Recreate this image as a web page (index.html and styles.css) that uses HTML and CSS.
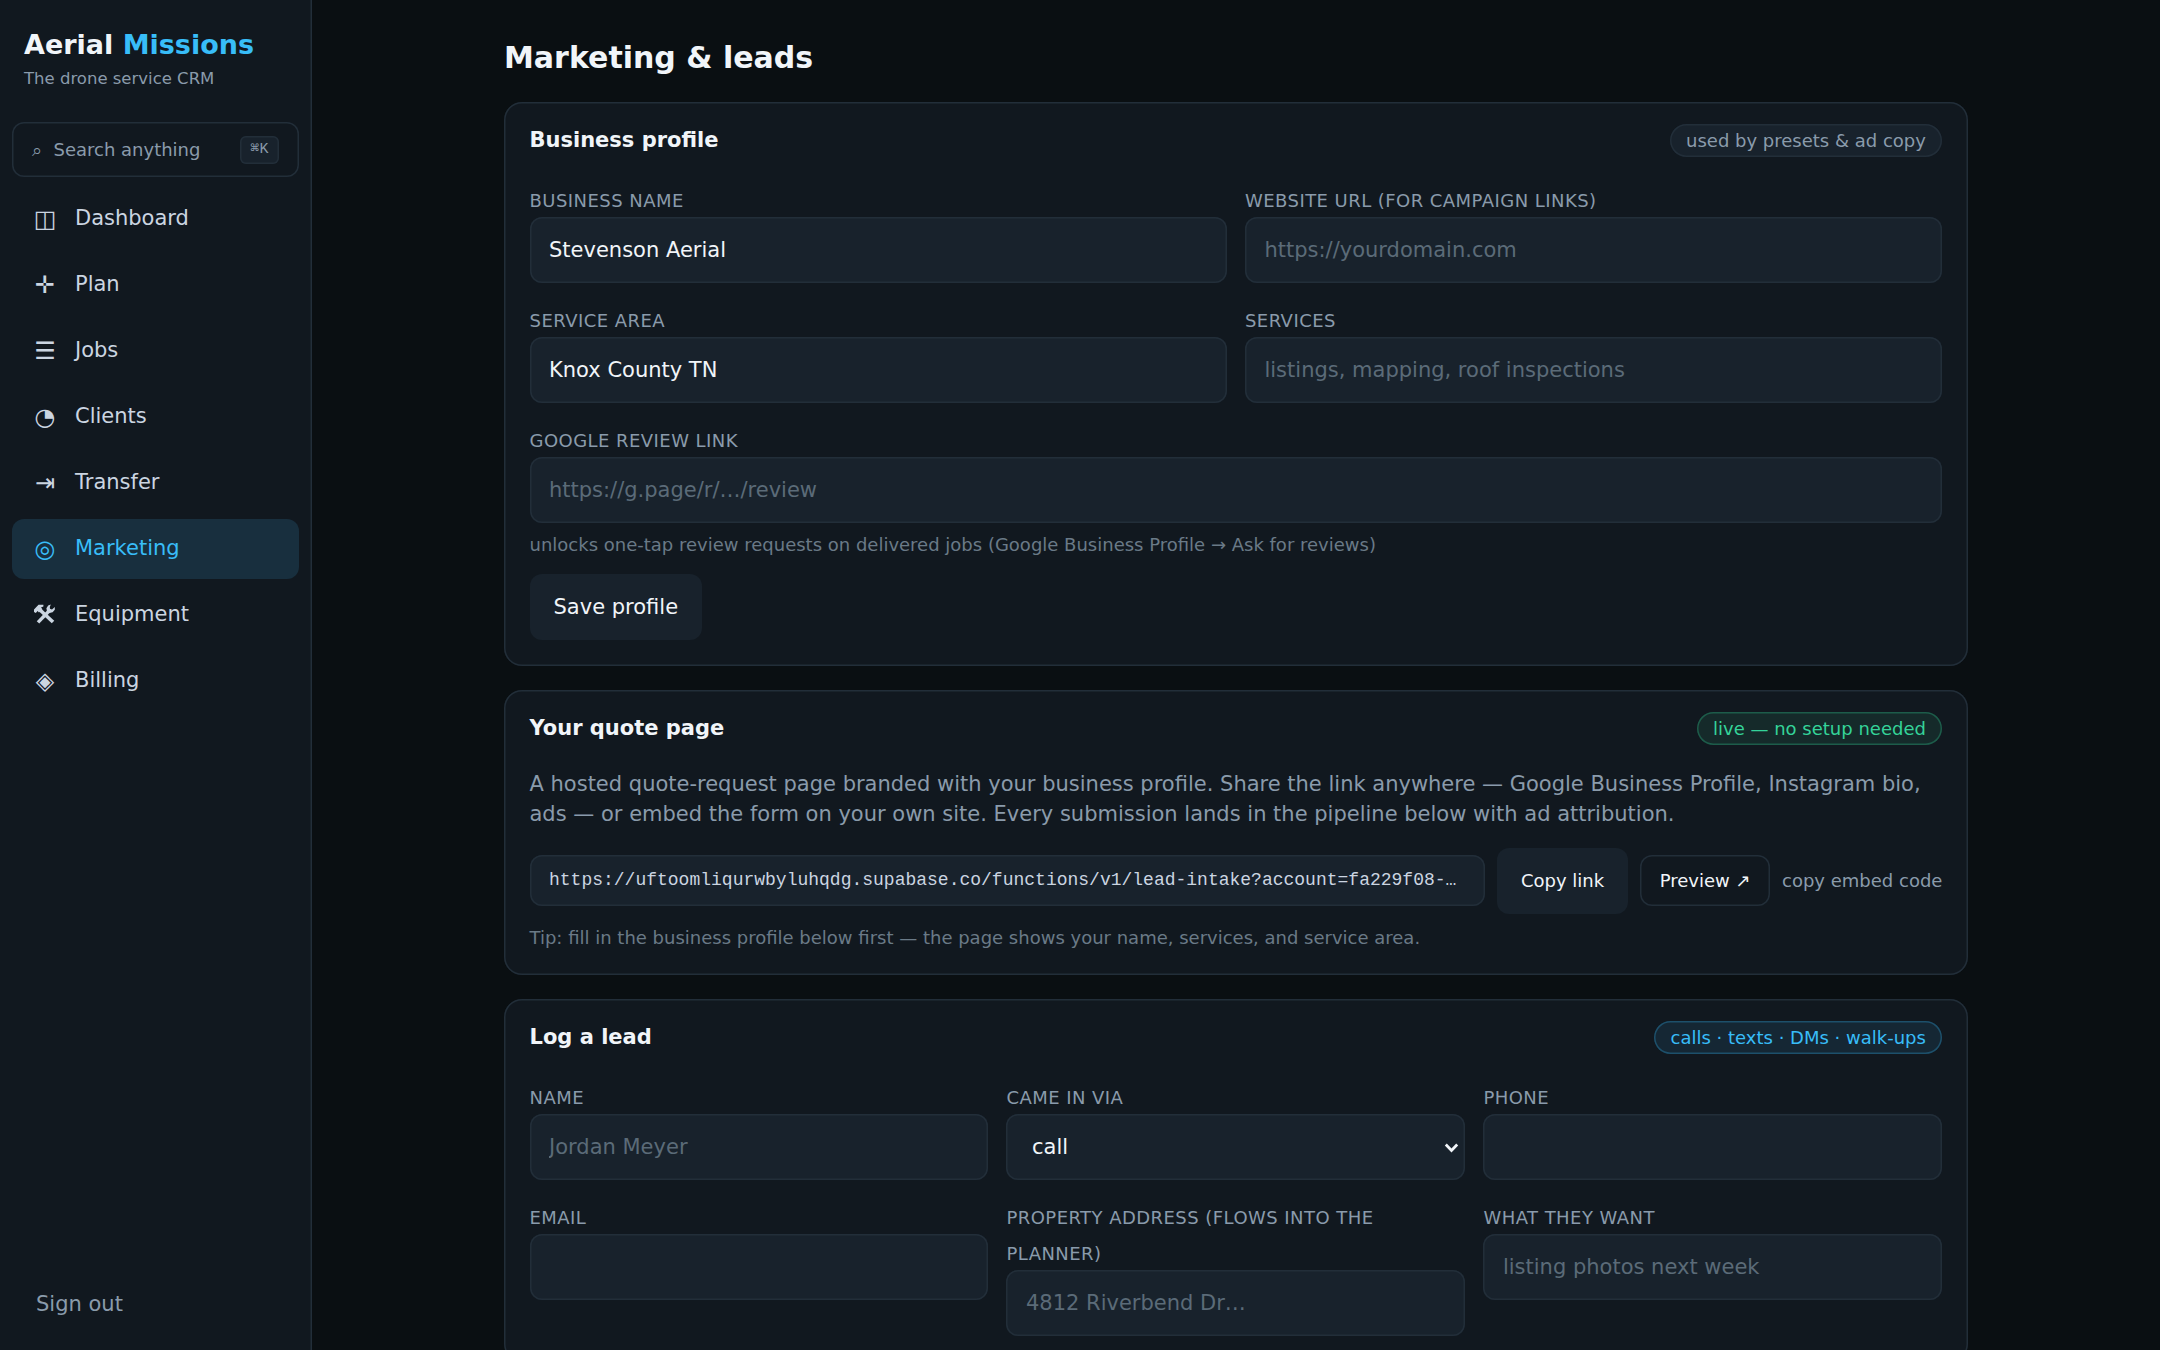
FILE: index.html
```html
<!DOCTYPE html>
<html lang="en">
<head>
    <meta charset="UTF-8">
    <meta name="viewport" content="width=device-width, initial-scale=1.0">
    <title>Aerial Missions - Marketing</title>
    <link rel="stylesheet" href="styles.css">
</head>
<body>
    <aside class="sidebar">
        <div class="brand">
            <div class="brand-name">Aerial <span class="accent">Missions</span></div>
            <div class="brand-sub">The drone service CRM</div>
        </div>

        <button class="search" type="button">
            <span class="search-icon">⌕</span>
            <span class="search-text">Search anything</span>
            <kbd>⌘K</kbd>
        </button>

        <nav class="nav">
            <a class="nav-item"><span class="nav-icon">◫</span>Dashboard</a>
            <a class="nav-item"><span class="nav-icon">✛</span>Plan</a>
            <a class="nav-item"><span class="nav-icon">☰</span>Jobs</a>
            <a class="nav-item"><span class="nav-icon">◔</span>Clients</a>
            <a class="nav-item"><span class="nav-icon">⇥</span>Transfer</a>
            <a class="nav-item active"><span class="nav-icon">◎</span>Marketing</a>
            <a class="nav-item">
                <svg class="nav-tools" width="30" height="20" viewBox="0 0 30 20">
                    <!-- hammer -->
                    <path d="M4 8 L4 5.5 L8.5 0.8 L13.4 0.8 L13.4 2.6 L11 3.6 L12.4 5.2 L9 8.6 L7.6 7 L5.8 9 Z" fill="currentColor"/>
                    <path d="M9.5 5.5 L23 18" stroke="currentColor" stroke-width="3.6"/>
                    <!-- wrench -->
                    <path d="M8 18.4 L20 6" stroke="currentColor" stroke-width="3.4"/>
                    <path d="M20.8 0.6 L18.2 1.4 L16.4 4.2 L17 7.2 L19.4 9 L22.6 8.2 L24.8 5.8 L24.8 3 L22 5.4 L20 4.8 L19.8 3 Z" fill="currentColor"/>
                </svg>Equipment</a>
            <a class="nav-item"><span class="nav-icon">◈</span>Billing</a>
        </nav>

        <button class="signout" type="button">Sign out</button>
    </aside>

    <main class="main">
        <h1>Marketing &amp; leads</h1>

        <section class="card">
            <div class="card-head">
                <h2>Business profile</h2>
                <span class="pill">used by presets &amp; ad copy</span>
            </div>
            <div class="fields two">
                <label class="field">
                    <span class="label">Business name</span>
                    <input type="text" value="Stevenson Aerial">
                </label>
                <label class="field">
                    <span class="label">Website URL (for campaign links)</span>
                    <input type="text" placeholder="https://yourdomain.com">
                </label>
                <label class="field">
                    <span class="label">Service area</span>
                    <input type="text" value="Knox County TN">
                </label>
                <label class="field">
                    <span class="label">Services</span>
                    <input type="text" placeholder="listings, mapping, roof inspections">
                </label>
                <label class="field wide">
                    <span class="label">Google review link</span>
                    <input type="text" placeholder="https://g.page/r/…/review">
                    <span class="hint">unlocks one-tap review requests on delivered jobs (Google Business Profile → Ask for reviews)</span>
                </label>
            </div>
            <button class="btn save" type="button">Save profile</button>
        </section>

        <section class="card">
            <div class="card-head">
                <h2>Your quote page</h2>
                <span class="pill green">live — no setup needed</span>
            </div>
            <p class="text">A hosted quote-request page branded with your business profile. Share the link anywhere — Google Business Profile, Instagram bio, ads — or embed the form on your own site. Every submission lands in the pipeline below with ad attribution.</p>
            <div class="link-row">
                <code class="link">https://uftoomliqurwbyluhqdg.supabase.co/functions/v1/lead-intake?account=fa229f08-…</code>
                <button class="btn small" type="button">Copy link</button>
                <a class="btn-outline">Preview ↗</a>
                <button class="btn-text" type="button">copy embed code</button>
            </div>
            <p class="tip">Tip: fill in the business profile below first — the page shows your name, services, and service area.</p>
        </section>

        <section class="card">
            <div class="card-head">
                <h2>Log a lead</h2>
                <span class="pill blue">calls · texts · DMs · walk-ups</span>
            </div>
            <div class="fields three">
                <label class="field">
                    <span class="label">Name</span>
                    <input type="text" placeholder="Jordan Meyer">
                </label>
                <label class="field">
                    <span class="label">Came in via</span>
                    <span class="select">
                        <select>
                            <option>call</option>
                        </select>
                        <svg class="chevron" width="15" height="10" viewBox="0 0 15 10"><path d="M1.8 1.6 L7.5 7.4 L13.2 1.6" fill="none" stroke="currentColor" stroke-width="2.8"/></svg>
                    </span>
                </label>
                <label class="field">
                    <span class="label">Phone</span>
                    <input type="text">
                </label>
                <label class="field">
                    <span class="label">Email</span>
                    <input type="text">
                </label>
                <label class="field">
                    <span class="label">Property address (flows into the planner)</span>
                    <input type="text" placeholder="4812 Riverbend Dr…">
                </label>
                <label class="field">
                    <span class="label">What they want</span>
                    <input type="text" placeholder="listing photos next week">
                </label>
            </div>
        </section>
    </main>
</body>
</html>
```
FILE: styles.css
```css
* {
    box-sizing: border-box;
}
body {
    margin: 0;
    height: 100vh;
    display: flex;
    overflow: hidden;
    background-color: #0a0f12;
    color: #f1f5f9;
    font-family: "DejaVu Sans", sans-serif;
    font-size: 21px;
    line-height: 30px;
}
h1, h2, p {
    margin: 0;
}
button, input, select {
    font: inherit;
    color: inherit;
}
button {
    border: none;
    background: none;
    padding: 0;
}

/* hairline is 1.5px, so it is a shadow instead of a border */
.search, kbd, .card, .pill, input, select, .link, .btn-outline {
    border: none;
    box-shadow: inset 0 0 0 1.5px #222e39;
}

/* sidebar */
.sidebar {
    width: 312px;
    flex: none;
    display: flex;
    flex-direction: column;
    padding: 24px 13.5px 24px 12px;
    background-color: #11181f;
    box-shadow: inset -1.5px 0 0 #222e39;
}
.brand {
    padding: 0 12px;
    margin-bottom: 31px;
}
.brand-name {
    font-size: 27px;
    font-weight: bold;
    line-height: 42px;
}
.accent {
    color: #38bdf8;
}
.brand-sub {
    font-size: 16.5px;
    line-height: 25px;
    color: #8a9bab;
}
.search {
    display: flex;
    align-items: center;
    gap: 12px;
    height: 54.5px;
    padding: 1px 19.5px 0;
    margin-bottom: 12px;
    border-radius: 12px;
    color: #8a9bab;
    font-size: 18px;
    text-align: left;
}
.search-text {
    flex: 1;
}
kbd {
    height: 28.5px;
    padding: 0 10.5px;
    border-radius: 6px;
    background-color: #18222c;
    font-family: "Liberation Mono", monospace;
    font-size: 15px;
    line-height: 27px;
}
.nav {
    display: flex;
    flex-direction: column;
    gap: 6px;
}
.nav-item {
    display: flex;
    align-items: center;
    gap: 15px;
    height: 60px;
    padding: 0 18px 1px;
    border-radius: 12px;
    color: #cbd5e1;
}
.nav-icon {
    width: 30px;
    padding-top: 2px;
    font-size: 24px;
    text-align: center;
}
.nav-item.active {
    background-color: #182f3e;
    color: #38bdf8;
}
.signout {
    margin-top: auto;
    height: 45px;
    padding: 0 24px;
    color: #8a9bab;
    text-align: left;
}

/* content */
.main {
    width: 1464px;
    margin: 0 auto;
    padding-top: 37px;
}
h1 {
    font-size: 30px;
    line-height: 42px;
    margin-bottom: 23px;
}
.card {
    padding: 22px 25.6px 26px 25.5px;
    margin-bottom: 24px;
    background-color: #11181f;
    border-radius: 18px;
}
.card-head {
    display: flex;
    justify-content: space-between;
    align-items: center;
    margin-bottom: 24px;
}
h2 {
    font-size: 21px;
    line-height: 30px;
    padding-bottom: 1px;
}
.pill {
    height: 33px;
    padding: 0 16.5px;
    border-radius: 17px;
    background-color: #18222c;
    color: #8a9bab;
    font-size: 18px;
    line-height: 33px;
}
.pill.green {
    background-color: #152a2a;
    box-shadow: inset 0 0 0 1.5px #1d5c4a;
    color: #34d399;
}
.pill.blue {
    background-color: #152734;
    box-shadow: inset 0 0 0 1.5px #1d506b;
    color: #38bdf8;
}

/* forms */
.fields {
    display: grid;
    gap: 18px;
    align-items: start;
}
.two {
    grid-template-columns: 1fr 1fr;
}
.three {
    grid-template-columns: 1fr 1fr 1fr;
}
.wide {
    grid-column: 1 / -1;
}
.field {
    font-size: 24px;
    line-height: 36px;
}
.label {
    color: #8a9bab;
    font-size: 18px;
    line-height: 24px;
    letter-spacing: 0.45px;
    text-transform: uppercase;
}
input, select {
    display: block;
    width: 100%;
    height: 66px;
    padding: 0 19.5px;
    border-radius: 12px;
    background-color: #18222c;
    font-size: 21px;
}
input::placeholder {
    color: #5b6b78;
    opacity: 1;
}
.select {
    display: block;
    position: relative;
}
select {
    appearance: none;
    padding-left: 25.5px;
}
.chevron {
    position: absolute;
    right: 6px;
    top: 29px;
}
.hint {
    display: block;
    margin-top: 9.5px;
    color: #6a7a87;
    font-size: 18px;
    line-height: 24px;
}
.btn {
    height: 66px;
    padding: 0 24px;
    border-radius: 12px;
    background-color: #18222c;
}
.btn.save {
    margin-top: 17.5px;
    display: block;
}
.btn.small {
    font-size: 18px;
}

/* quote link */
.text {
    color: #8a9bab;
}
.link-row {
    display: flex;
    align-items: center;
    gap: 12px;
    margin-top: 18.5px;
}
.link {
    flex: 1;
    min-width: 0;
    height: 51px;
    padding: 0 19.5px;
    border-radius: 12px;
    background-color: #18222c;
    color: #cbd5e1;
    font-family: "Liberation Mono", monospace;
    font-size: 18px;
    line-height: 50px;
    white-space: nowrap;
    overflow: hidden;
}
.btn-outline {
    height: 51px;
    padding: 0 19.5px;
    border-radius: 12px;
    font-size: 18px;
    line-height: 51px;
}
.btn-text {
    color: #8a9bab;
    font-size: 18px;
}
.tip {
    margin-top: 12px;
    margin-bottom: -0.5px;
    color: #6a7a87;
    font-size: 18px;
    line-height: 24px;
}
```
